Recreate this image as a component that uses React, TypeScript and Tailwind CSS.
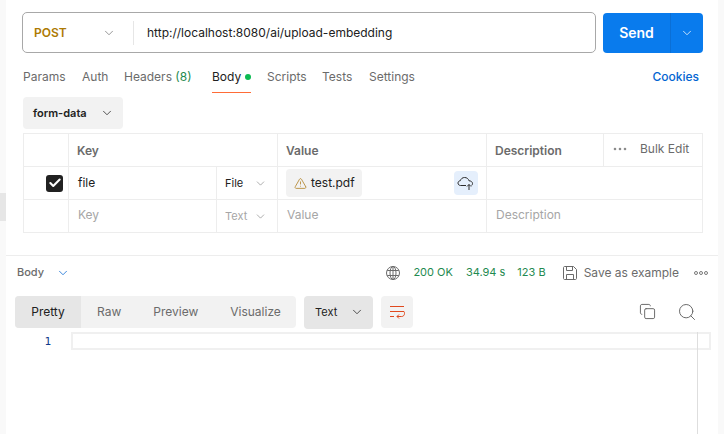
import { ChevronDown, Copy, Search, TriangleAlert, Check } from 'lucide-react'

const requestTabs = [
  { label: 'Params', width: 'w-[59px]' },
  { label: 'Auth', width: 'w-[42px]' },
]

function CloudUpload() {
  return (
    <svg width="18" height="16" viewBox="0 0 18 16" fill="none" stroke="#2b2b2b" strokeWidth="1">
      <path d="M5 10.5H3.6C2.1 10.5 1 9.4 1 8.1C1 6.8 2 5.8 3.3 5.7C4 3.6 5.6 2.5 7.6 2.5C9.8 2.5 11.5 3.9 12 5.8C13.9 5.8 15.5 6.9 15.5 8.6C15.5 9.4 15.1 10 14.6 10.5" />
      <path d="M5 10.5H9" />
      <path d="M12 15V9.5M10 11.5L12 9.5L14 11.5" />
    </svg>
  )
}

function WrapIcon() {
  return (
    <svg width="16" height="14" viewBox="0 0 16 14" fill="none" stroke="#e0491e" strokeWidth="1">
      <path d="M1 1.5H15" />
      <path d="M1 6.5H15" />
      <path d="M1 11.5H5" />
      <path d="M15 6.5C15.4 7 15.5 7.7 15.5 8.5C15.5 10.2 14.3 11.5 12.6 11.5H8" />
      <path d="M10 9.5L8 11.5L10 13.5" />
    </svg>
  )
}

function GlobeIcon({ className }: { className?: string }) {
  return (
    <svg className={className} width="14" height="14" viewBox="0 0 14 14" fill="none" stroke="#6b6b6b" strokeWidth="1">
      <circle cx="7" cy="7" r="6.5" />
      <ellipse cx="7" cy="7" rx="3" ry="6.5" />
      <path d="M7 .5V13.5M1.2 4.5H12.8M1.2 9.5H12.8" />
    </svg>
  )
}

function SaveIcon({ className }: { className?: string }) {
  return (
    <svg className={className} width="14" height="14" viewBox="0 0 14 14" fill="none" stroke="#6b6b6b" strokeWidth="1">
      <path d="M1.5 .5H10.5L13.5 3.5V12.5C13.5 13 13 13.5 12.5 13.5H1.5C1 13.5 .5 13 .5 12.5V1.5C.5 1 1 .5 1.5 .5Z" />
      <path d="M3.5 .5V4.5H9.5V.5" />
      <path d="M3.5 13.5V8.5H10.5V13.5" />
    </svg>
  )
}

function Dots({ className, r, filled }: { className?: string; r: number; filled?: boolean }) {
  return (
    <svg className={className} width="14" height="6" viewBox="0 0 14 6" fill={filled ? '#808080' : 'none'} stroke="#6b6b6b" strokeWidth={filled ? 0.3 : 0.9}>
      <circle cx="2" cy="3" r={r} />
      <circle cx="7" cy="3" r={r} />
      <circle cx="12" cy="3" r={r} />
    </svg>
  )
}

export default function App() {
  return (
    <div className="flex h-[434px] w-[724px] overflow-hidden bg-white font-['Inter',sans-serif] text-[12px] text-[#6b6b6b]">
      {/* sidebar gutter */}
      <div className="flex w-[6px] shrink-0 flex-col bg-[#f9f9f9] pt-[193px]">
        <div className="h-[28px] bg-[#e6e6e6]" />
      </div>

      <div className="flex w-[712px] shrink-0 flex-col">
        {/* url bar */}
        <div className="mt-[12px] flex h-[41px] items-center gap-[7px] pl-[16px] pr-[15px]">
          <div className="flex h-[41px] w-[574px] items-center rounded-[5px] border border-[#a8a8a8]">
            <div className="flex w-[110px] items-center justify-between pl-[11px] pr-[17px]">
              <span className="text-[12px] font-semibold text-[#ad7a03]">POST</span>
              <ChevronDown size={14} strokeWidth={1.2} color="#6b6b6b" />
            </div>
            <div className="h-[24px] w-px bg-[#e6e6e6]" />
            <span className="ml-[13px] text-[12px] text-[#212121]">http://localhost:8080/ai/upload-embedding</span>
          </div>
          <div className="flex h-[40px] w-[100px] overflow-hidden rounded-[4px] bg-[#097bed] text-white">
            <div className="flex w-[68px] items-center justify-center border-r border-[#0a6fd6] text-[14px] font-semibold">Send</div>
            <div className="flex flex-1 items-center justify-center">
              <ChevronDown size={14} strokeWidth={1.3} color="#ffffff" />
            </div>
          </div>
        </div>

        {/* request tabs */}
        <div className="mt-[8px] flex h-[32px] items-center pl-[17px] pr-[19px]">
          {requestTabs.map((t) => (
            <span key={t.label} className={t.width}>{t.label}</span>
          ))}
          <span className="w-[88px]">Headers <span className="text-[#1f8a50]">(8)</span></span>
          <div className="relative flex h-[32px] w-[55px] items-center">
            <span className="text-[#212121]">Body</span>
            <span className="ml-[4px] h-[6px] w-[6px] rounded-full bg-[#0cbb52]" />
            <span className="absolute bottom-0 left-0 h-px w-[39px] bg-[#ff6c37]" />
          </div>
          <span className="w-[55px]">Scripts</span>
          <span className="w-[47px]">Tests</span>
          <span>Settings</span>
          <span className="ml-auto font-medium text-[#0265d2]">Cookies</span>
        </div>

        {/* body type */}
        <div className="ml-[17px] mt-[4px] flex h-[32px] w-[100px] items-center gap-[13px] rounded-[4px] bg-[#f2f2f2] pl-[10px]">
          <span className="text-[11px] font-semibold text-[#212121]">form-data</span>
          <ChevronDown size={14} strokeWidth={1.3} color="#212121" />
        </div>

        {/* params table */}
        <div className="ml-[17px] mt-[4px] w-[680px] border border-[#ededed]">
          <div className="flex h-[33px] border-b border-[#ededed]">
            <div className="w-[45px] border-r border-[#ededed]" />
            <div className="flex w-[209px] items-center border-r border-[#ededed] pl-[8px] pt-[2px] font-semibold">Key</div>
            <div className="flex w-[209px] items-center border-r border-[#ededed] pl-[8px] pt-[2px] font-semibold">Value</div>
            <div className="flex w-[117px] items-center border-r border-[#ededed] pl-[8px] pt-[2px] font-semibold">Description</div>
            <div className="flex flex-1 items-center pb-[2px] pl-[9px]">
              <Dots r={1.1} filled />
              <span className="ml-[13px]">Bulk Edit</span>
            </div>
          </div>
          <div className="flex h-[33px] border-b border-[#ededed]">
            <div className="flex w-[45px] items-center justify-end border-r border-[#ededed] pr-[5px]">
              <div className="flex h-[17px] w-[17px] items-center justify-center rounded-[3px] bg-[#212121]">
                <Check size={14} strokeWidth={3.6} color="#ffffff" />
              </div>
            </div>
            <div className="flex w-[148px] items-center border-r border-[#ededed] pl-[9px] text-[#212121]">file</div>
            <div className="flex w-[61px] items-center justify-between border-r border-[#ededed] pl-[8px] pr-[10px] text-[11px] text-[#212121]">
              <span>File</span>
              <ChevronDown size={13} strokeWidth={1} color="#6b6b6b" />
            </div>
            <div className="flex w-[209px] items-center justify-between border-r border-[#ededed] px-[8px]">
              <div className="flex h-[28px] w-[76px] items-center gap-[4px] rounded-[4px] bg-[#f2f2f2] pl-[8px] text-[#212121]">
                <TriangleAlert size={13} strokeWidth={1.7} color="#b88f3e" />
                <span>test.pdf</span>
              </div>
              <div className="flex h-[24px] w-[24px] items-center justify-center rounded-[4px] bg-[#e5effc]">
                <CloudUpload />
              </div>
            </div>
            <div className="flex-1" />
          </div>
          <div className="flex h-[32px] text-[#a6a6a6]">
            <div className="w-[45px] border-r border-[#ededed]" />
            <div className="flex w-[148px] items-center border-r border-[#ededed] pb-[2px] pl-[9px]">Key</div>
            <div className="flex w-[61px] items-center justify-between border-r border-[#ededed] pl-[8px] pr-[10px] text-[11px]">
              <span>Text</span>
              <ChevronDown size={13} strokeWidth={1} color="#6b6b6b" />
            </div>
            <div className="flex w-[209px] items-center border-r border-[#ededed] pb-[2px] pl-[9px]">Value</div>
            <div className="flex flex-1 items-center pb-[2px] pl-[9px]">Description</div>
          </div>
        </div>

        {/* response */}
        <div className="mt-[22px] flex h-[34px] items-center border-t border-[#ededed] pl-[11px] pr-[10px] text-[12px]">
          <span className="text-[11px] font-medium">Body</span>
          <ChevronDown size={14} strokeWidth={1.3} color="#0265d2" className="ml-[12px]" />
          <GlobeIcon className="ml-auto" />
          <span className="ml-[13px] text-[11px] text-[#1f8a50]">200 OK</span>
          <span className="ml-[13px] text-[11px] text-[#1f8a50]">34.94 s</span>
          <span className="ml-[12px] text-[11px] text-[#1f8a50]">123 B</span>
          <SaveIcon className="ml-[17px]" />
          <span className="ml-[7px]">Save as example</span>
          <Dots r={1.5} className="ml-[15px]" />
        </div>

        <div className="mt-[7px] flex h-[32px] items-center pl-[9px] pr-[21px]">
          <div className="flex h-[32px] w-[281px] items-center overflow-hidden rounded-[4px] bg-[#f2f2f2]">
            <div className="flex h-full w-[66px] items-center justify-center bg-[#e6e6e6] text-[#212121]">Pretty</div>
            <span className="ml-[16px]">Raw</span>
            <span className="ml-[32px]">Preview</span>
            <span className="ml-[32px]">Visualize</span>
          </div>
          <div className="ml-[8px] flex h-[33px] w-[69px] items-center gap-[13px] rounded-[4px] bg-[#e6e6e6] pl-[11px] text-[11px] text-[#212121]">
            <span>Text</span>
            <ChevronDown size={14} strokeWidth={1.3} color="#212121" />
          </div>
          <div className="ml-[8px] flex h-[32px] w-[32px] items-center justify-center rounded-[4px] bg-[#f2f2f2]">
            <WrapIcon />
          </div>
          <Copy size={17} strokeWidth={1.4} color="#6b6b6b" className="mb-[2px] ml-auto" />
          <Search size={20} strokeWidth={1.2} color="#6b6b6b" className="ml-[21px]" />
        </div>

        {/* editor */}
        <div className="relative mt-[4px] flex-1">
          <div className="flex">
            <span className="w-[65px] pr-[20px] pt-[2px] text-right font-['DejaVu_Sans_Mono',monospace] text-[11px] text-[#0f3a8a]">1</span>
            <div className="h-[18px] w-[640px] border-2 border-[#f0f0f0]" />
          </div>
          <div className="absolute bottom-0 left-[691px] top-0 w-px bg-[#dedede]" />
        </div>
      </div>

      <div className="w-[6px] shrink-0 bg-[#f9f9f9]" />
    </div>
  )
}
